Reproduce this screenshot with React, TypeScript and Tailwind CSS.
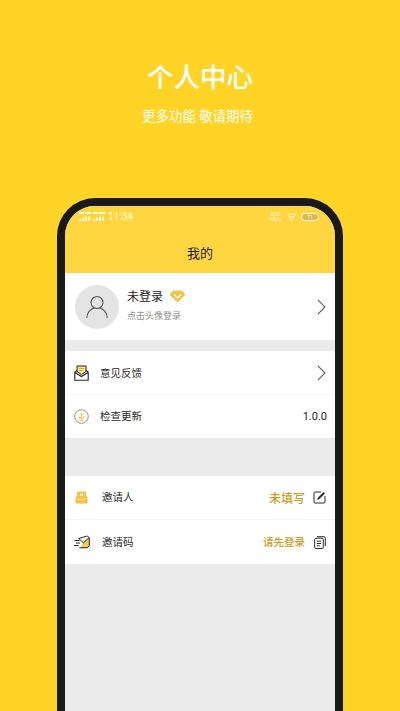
const FONT = "font-['Noto_Sans_CJK_SC','Noto_Sans',sans-serif]";

// ── Icons ──────────────────────────────────────────────────────────────────

function Chevron() {
  return (
    <svg width="9" height="16" viewBox="0 0 9 16" fill="none" stroke="#666" strokeWidth="1.100">
      <path d="M1 1 8 8l-7 7" />
    </svg>
  );
}

function SignalBars() {
  return (
    <svg width="12" height="10" viewBox="0 0 12 10" fill="#fffbe8">
      <rect x="0" y="0" width="5" height="2" />
      <rect x="6" y="0" width="6" height="2" />
      <rect x="0" y="7" width="2" height="2" />
      <rect x="3" y="6" width="2" height="3" />
      <rect x="6" y="5" width="2" height="4" />
      <rect x="9" y="4" width="2" height="5" opacity="0.7" />
    </svg>
  );
}

function Wifi() {
  return (
    <svg width="11" height="9" viewBox="0 0 11 9" fill="none" stroke="#fffbe8" strokeWidth="1">
      <path d="M.6 2.800c2.800-2.400 7-2.400 9.800 0M2.200 4.600c1.900-1.600 4.700-1.600 6.600 0M3.800 6.300c1-.8 2.400-.8 3.400 0" />
      <circle cx="5.500" cy="8" r=".7" fill="#fffbe8" stroke="none" />
    </svg>
  );
}

function UserOutline() {
  return (
    <svg width="22" height="24" viewBox="0 0 22 24" fill="none" stroke="#555" strokeWidth="1.100">
      <circle cx="11" cy="7.500" r="6" />
      <path d="M.8 23c0-5.500 3.700-9 7.200-10M21.200 23c0-5.500-3.700-9-7.200-10" />
    </svg>
  );
}

function Diamond() {
  return (
    <svg width="17" height="13" viewBox="0 0 17 13">
      <path d="M4 .5h9l3.500 4.200L8.500 12.500.5 4.700z" fill="#efc550" />
      <path d="M5 4.500l3.500 3.500L12 4.500" fill="none" stroke="#fff" strokeWidth="1.100" />
    </svg>
  );
}

function MailOpen() {
  return (
    <svg width="15" height="16" viewBox="0 0 15 16" fill="none">
      <path d="M3 6.500V1h9v5.500L7.500 9.500z" fill="#fbe48d" stroke="#222" strokeWidth="1" />
      <path d="M5 3.500h5M5 5.500h3.500" stroke="#caa12c" strokeWidth=".8" />
      <path d="M3 5.500.8 7v8.200h13.400V7L12 5.500M1 7.500l6.500 4 6.500-4" stroke="#222" strokeWidth="1.100" />
    </svg>
  );
}

function UpdateCircle() {
  return (
    <svg width="15" height="15" viewBox="0 0 15 15" fill="none">
      <circle cx="7.500" cy="7.500" r="6.800" fill="#fffdf2" stroke="#8a8a8a" strokeWidth=".9" />
      <path d="M7.500 3.500v6M5 7.500l2.500 2.500L10 7.500M5 11.500h5" stroke="#f0cf6a" strokeWidth="1.200" />
    </svg>
  );
}

function InviterBox() {
  return (
    <svg width="13" height="13" viewBox="0 0 13 13">
      <path d="M2 1.500a1 1 0 0 1 1-1h7a1 1 0 0 1 1 1V5l1.500 1v5.500a1 1 0 0 1-1 1h-10a1 1 0 0 1-1-1V6L2 5z" fill="#f6c24e" />
      <circle cx="6.500" cy="3.500" r="1.600" fill="#fdeebc" />
      <path d="M1.500 7.500 6.500 9l5-1.500" fill="none" stroke="#fbe3a4" strokeWidth="1" />
    </svg>
  );
}

function FlyingMail() {
  return (
    <svg width="16" height="14" viewBox="0 0 16 14" fill="none">
      <path d="M9 7.500l6-4.500v8l-2.500 2H7z" fill="#f6cc52" />
      <path d="M4.500 3.500 12.500 1.200h1.200l1.600 1.600v8L13 12.800H5.500M4.800 3.600 9.500 7.800 15 2.600M.5 5.500h5M2 8h4M0 10.500h4.500" stroke="#222" strokeWidth="1" />
    </svg>
  );
}

function EditSquare() {
  return (
    <svg width="13" height="13" viewBox="0 0 13 13" fill="none" stroke="#2a2a2a" strokeWidth="1">
      <path d="M8 1H2a1 1 0 0 0-1 1v9a1 1 0 0 0 1 1h9a1 1 0 0 0 1-1V5" />
      <path d="M4.500 8.500 5 6.800 10.500 1.300l1.200 1.200L6.200 8z" fill="#2a2a2a" strokeWidth=".5" />
    </svg>
  );
}

function CopyDoc() {
  return (
    <svg width="12" height="13" viewBox="0 0 12 13" fill="none" stroke="#2a2a2a" strokeWidth="1">
      <rect x="0.700" y="2.200" width="8.600" height="10.300" rx="1.200" />
      <path d="M3 .7h6.800a1.500 1.500 0 0 1 1.500 1.500v8M2.800 5.200h4.400M2.800 7.500h4.400M2.800 9.800h3" />
    </svg>
  );
}

// ── Phone parts ────────────────────────────────────────────────────────────

function StatusBar() {
  return (
    <div className="flex h-[21px] items-center justify-between pl-[14px] pr-[16px] pt-[1px]">
      <div className="flex items-center gap-[2px]">
        <SignalBars />
        <SignalBars />
        <span className="ml-[1px] font-['Roboto',sans-serif] text-[10px] leading-none text-[#fffbe8]">11:34</span>
      </div>
      <div className="flex items-center gap-[5px]">
        <span className="flex flex-col items-center font-['Roboto',sans-serif] text-[5px] leading-[5px] text-[#fffbe8]">
          <span>0.20</span>
          <span>KB/s</span>
        </span>
        <Wifi />
        <span className="ml-[-1px] flex h-[8px] w-[18px] items-center justify-center rounded-full border border-[#fffbe8] bg-[#d9b94a] font-['Roboto',sans-serif] text-[5px] leading-none text-[#fffbe8]">71</span>
      </div>
    </div>
  );
}

function Row({ icon, label, right, labelClass, rowClass }: {
  icon: React.ReactNode;
  label: string;
  right: React.ReactNode;
  labelClass: string;
  rowClass: string;
}) {
  return (
    <div className={`flex items-center pr-[9px] ${rowClass}`}>
      <span className="flex w-[32px] shrink-0 justify-center pl-[1px]">{icon}</span>
      <span className={`text-[10.500px] leading-none text-[#2b2b2b] ${labelClass}`}>{label}</span>
      <div className="ml-auto flex items-center">{right}</div>
    </div>
  );
}

// ── Page ───────────────────────────────────────────────────────────────────

export default function App() {
  return (
    <div className={`flex h-[711px] w-[400px] flex-col items-center overflow-hidden bg-[#ffd426] ${FONT}`}>
      <h1 className="mt-[58px] text-[26.500px] font-medium leading-[36px] text-white">个人中心</h1>
      <p className="mr-[5px] mt-[12px] text-[13.500px] leading-[18px] text-white">更多功能 敬请期待</p>

      <div className="mt-[74px] flex h-[513px] w-[286px] shrink-0 flex-col overflow-hidden rounded-t-[38px] border-x-[8px] border-t-[8px] border-[#1a1a1a] bg-[#ebebeb]">
        <div className="h-[67px] shrink-0 bg-[#ffd63f]">
          <StatusBar />
          <p className="mt-[14px] text-center text-[13px] leading-[24px] text-[#1c1c1c]">我的</p>
        </div>

        <div className="flex h-[67px] shrink-0 items-center bg-white pl-[10px] pr-[9px]">
          <div className="flex h-[44px] w-[44px] shrink-0 items-center justify-center rounded-full bg-[#e4e4e4]">
            <UserOutline />
          </div>
          <div className="mb-[4px] ml-[8px] flex flex-col">
            <div className="flex items-center gap-[6px]">
              <span className="text-[12px] leading-[18px] text-[#222]">未登录</span>
              <Diamond />
            </div>
            <span className="mt-[4px] text-[9px] leading-[13px] text-[#8f8f8f]">点击头像登录</span>
          </div>
          <span className="ml-auto flex">
            <Chevron />
          </span>
        </div>

        <div className="mt-[11px] shrink-0 bg-white">
          <Row
            icon={<MailOpen />}
            label="意见反馈"
            labelClass="ml-[3px]"
            rowClass="h-[44px] border-b border-[#f6f6f6] pt-[1px]"
            right={<Chevron />}
          />
          <Row
            icon={<UpdateCircle />}
            label="检查更新"
            labelClass="ml-[3px]"
            rowClass="h-[43px]"
            right={<span className="mr-[-1px] font-['Roboto',sans-serif] text-[11px] leading-none text-[#222]">1.0.0</span>}
          />
        </div>

        <div className="mt-[38px] shrink-0 bg-white">
          <Row
            icon={<InviterBox />}
            label="邀请人"
            labelClass="ml-[5px]"
            rowClass="h-[44px] border-b border-[#f6f6f6]"
            right={
              <>
                <span className="text-[12px] font-medium leading-none text-[#cc9c24]">未填写</span>
                <span className="ml-[8px] flex"><EditSquare /></span>
              </>
            }
          />
          <Row
            icon={<FlyingMail />}
            label="邀请码"
            labelClass="ml-[5px]"
            rowClass="h-[44px]"
            right={
              <>
                <span className="text-[10.500px] font-medium leading-none text-[#cc9c24]">请先登录</span>
                <span className="ml-[9px] flex"><CopyDoc /></span>
              </>
            }
          />
        </div>
      </div>
    </div>
  );
}
